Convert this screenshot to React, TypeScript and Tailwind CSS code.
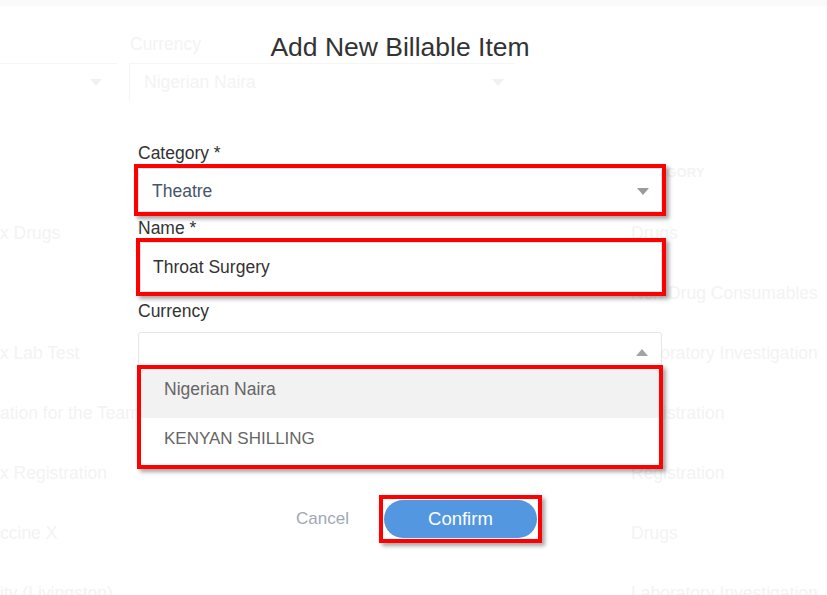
import React from "react";

const ghostRows = [
  { left: "", right: "CATEGORY", head: true },
  { left: "x Drugs", right: "Drugs" },
  { left: "", right: "Non Drug Consumables" },
  { left: "x Lab Test", right: "Laboratory Investigation" },
  { left: "ation for the Team", right: "Registration" },
  { left: "x Registration", right: "Registration" },
  { left: "ccine X", right: "Drugs" },
  { left: "ity (Livingston)", right: "Laboratory Investigation" },
];

const Caret = ({ up = false, tone = "#9a9a9a" }: { up?: boolean; tone?: string }) => (
  <svg width="12" height="7" viewBox="0 0 12 7" className="shrink-0">
    <path d={up ? "M0 7 L6 0 L12 7 Z" : "M0 0 L12 0 L6 7 Z"} fill={tone} />
  </svg>
);

const App = () => {
  return (
    <div className="relative w-[827px] h-[595px] overflow-hidden bg-white font-['Liberation_Sans',Arial,sans-serif]">
      {/* faded page behind the modal */}
      <div className="w-full h-full text-[#f3f3f3]">
        <div className="h-[6px] bg-[#fafafa]" />
        <p className="mt-[28px] pl-[130px] text-[17.5px] leading-[20px]">Currency</p>
        <div className="flex mt-[9px]">
          <div className="w-[117px] h-[38px] border-t border-[#f6f6f6] flex items-center justify-end pr-[15px]">
            <Caret tone="#f1f1f1" />
          </div>
          <div className="ml-[12px] w-[386px] h-[38px] border-t border-l border-[#f6f6f6] flex items-center justify-between pl-[14px] pr-[11px]">
            <span className="text-[17.5px]">Nigerian Naira</span>
            <Caret tone="#f1f1f1" />
          </div>
        </div>
        <div className="mt-[42px]">
          {ghostRows.map((r, i) => (
            <div key={i} className="flex items-center h-[60px]">
              <span className="w-[631px] text-[17.5px] whitespace-nowrap">{r.left}</span>
              <span className={r.head ? "text-[13px] font-bold tracking-[0.2px]" : "text-[17.5px] whitespace-nowrap"}>{r.right}</span>
            </div>
          ))}
        </div>
      </div>

      {/* modal */}
      <div className="absolute inset-0">
        <div className="ml-[138px] w-[524px] pt-[32px]">
          <h2 className="text-center text-[26.5px] leading-[30px] text-[#333]">Add New Billable Item</h2>

          <label className="block mt-[81px] text-[17.5px] leading-[20px] text-[#333]">Category *</label>
          <div className="mt-[1px] -mx-[4px] border-4 border-[#ff0000] shadow-[3px_3px_4px_rgba(0,0,0,0.35)] bg-white">
            <div className="h-[44px] border border-[#e4e4e4] rounded-[2px] flex items-center justify-between pl-[13px] pr-[12px] pt-[2px]">
              <span className="text-[17.5px] text-[#475569]">Theatre</span>
              <Caret />
            </div>
          </div>

          <label className="block mt-[2px] text-[17.5px] leading-[20px] text-[#333]">Name *</label>
          <div className="-ml-[2px] -mr-[4px] border-4 border-[#ff0000] shadow-[3px_3px_4px_rgba(0,0,0,0.35)] bg-white">
            <div className="h-[50px] border border-[#e4e4e4] rounded-[2px] flex items-center pl-[12px]">
              <span className="text-[17.5px] text-[#333]">Throat Surgery</span>
            </div>
          </div>

          <label className="block mt-[5px] text-[17.5px] leading-[20px] text-[#333]">Currency</label>
          <div className="relative mt-[11px] h-[40px] border border-[#e6e6e6] rounded-[3px] bg-white flex items-start justify-end pt-[16px] pr-[13px]">
            <Caret up tone="#a3a3a3" />
            <div className="absolute top-[32px] -left-[2px] w-[526px] border-4 border-[#ff0000] shadow-[3px_3px_4px_rgba(0,0,0,0.35)] bg-white">
              <div className="h-[49px] bg-[#f2f2f2] pt-[10px] pl-[23px] text-[17.5px] leading-[20px] text-[#666]">Nigerian Naira</div>
              <div className="h-[47px] pt-[11px] pl-[23px] text-[17px] leading-[20px] text-[#666]">KENYAN SHILLING</div>
            </div>
          </div>

          <div className="mt-[123px] pl-[158px] flex items-center">
            <button className="text-[17px] text-[#a0a8b6]">Cancel</button>
            <div className="ml-[30px] border-4 border-[#ff0000] shadow-[3px_3px_4px_rgba(0,0,0,0.35)] p-[1px] bg-white">
              <button className="w-[153px] h-[38px] rounded-full bg-[#5397e1] text-white text-[18.5px]">Confirm</button>
            </div>
          </div>
        </div>
      </div>
    </div>
  );
};

export default App;
